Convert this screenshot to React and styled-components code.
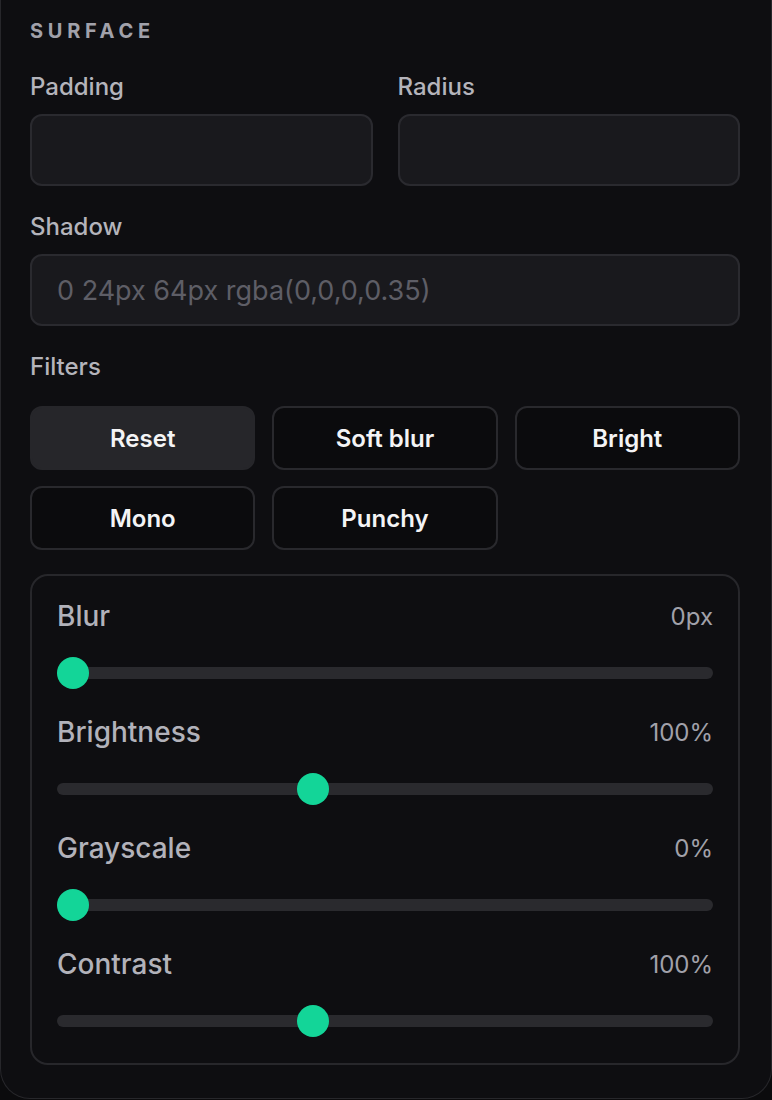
import React from "react";
import styled, { createGlobalStyle } from "styled-components";

const Global = createGlobalStyle`
  html, body { margin: 0; padding: 0; background: #0b0b0d; }
  body { font-family: Inter, "Noto Sans", sans-serif; -webkit-font-smoothing: antialiased; }
  * { box-sizing: border-box; }
`;

const Panel = styled.div`
  width: 772px;
  background: #0e0e11;
  border: 1px solid #27272b;
  border-top: none;
  border-radius: 0 0 30px 30px;
  padding: 19px 31px 33px 29px;
  display: flex;
  flex-direction: column;
`;

const SectionTitle = styled.div`
  font-size: 20px;
  line-height: 24px;
  font-weight: 700;
  letter-spacing: 4.7px;
  color: #a1a1aa;
  text-transform: uppercase;
  margin-bottom: 30px;
`;

const Grid2 = styled.div`
  display: grid;
  grid-template-columns: 1fr 1fr;
  column-gap: 25px;
`;

const Field = styled.div`
  display: flex;
  flex-direction: column;
  gap: 13px;
  margin-bottom: ${(p) => p.$mb ?? 27}px;
`;

const Label = styled.div`
  font-size: 24px;
  line-height: 28px;
  font-weight: 500;
  color: #b4b4bb;
`;

const Input = styled.input`
  height: 72px;
  width: 100%;
  background: #19191d;
  border: 2px solid #2a2a2f;
  border-radius: 12px;
  padding: 0 25px;
  font-family: Inter, sans-serif;
  font-size: 27px;
  color: #e4e4e7;
  outline: none;
  &::placeholder { color: #5e5e66; }
`;

const FilterGrid = styled.div`
  display: grid;
  grid-template-columns: repeat(3, 1fr);
  gap: 16px 17px;
  margin-top: 25px;
  margin-bottom: 24px;
`;

const FilterButton = styled.button`
  height: 64px;
  border-radius: 12px;
  border: 2px solid ${(p) => (p.$active ? "#26262a" : "#29292d")};
  background: ${(p) => (p.$active ? "#26262a" : "#0b0b0d")};
  color: #f4f4f5;
  font-family: Inter, sans-serif;
  font-size: 24px;
  font-weight: 560;
  cursor: pointer;
`;

const SliderBox = styled.div`
  border: 2px solid #27272b;
  border-radius: 18px;
  padding: 23px 25px 26px;
  display: flex;
  flex-direction: column;
  gap: 26px;
`;

const SliderRow = styled.div`
  display: flex;
  flex-direction: column;
  gap: 24px;
`;

const SliderHead = styled.div`
  display: flex;
  justify-content: space-between;
  align-items: center;
  height: 34px;
`;

const SliderName = styled.div`
  font-size: 28px;
  font-weight: 500;
  color: #b2b2ba;
`;

const SliderValue = styled.div`
  font-size: 24px;
  font-weight: 400;
  color: #a1a1aa;
`;

const TrackArea = styled.div`
  position: relative;
  height: 32px;
  display: flex;
  align-items: center;
`;

const Track = styled.div`
  width: 100%;
  height: 12px;
  border-radius: 6px;
  background: #2a2a2e;
`;

const Thumb = styled.div`
  position: absolute;
  top: 0;
  width: 32px;
  height: 32px;
  border-radius: 50%;
  background: #13d598;
`;

const sliders = [
  { name: "Blur", value: "0px", pct: 0 },
  { name: "Brightness", value: "100%", pct: 100 / 260 },
  { name: "Grayscale", value: "0%", pct: 0 },
  { name: "Contrast", value: "100%", pct: 100 / 260 },
];

const filters = ["Reset", "Soft blur", "Bright", "Mono", "Punchy"];

export default function App() {
  return (
    <>
      <Global />
      <Panel>
        <SectionTitle>Surface</SectionTitle>
        <Grid2>
          <Field>
            <Label>Padding</Label>
            <Input />
          </Field>
          <Field>
            <Label>Radius</Label>
            <Input />
          </Field>
        </Grid2>
        <Field>
          <Label>Shadow</Label>
          <Input placeholder="0 24px 64px rgba(0,0,0,0.35)" />
        </Field>
        <Label>Filters</Label>
        <FilterGrid>
          {filters.map((f, i) => (
            <FilterButton key={f} $active={i === 0}>{f}</FilterButton>
          ))}
        </FilterGrid>
        <SliderBox>
          {sliders.map((s) => (
            <SliderRow key={s.name}>
              <SliderHead>
                <SliderName>{s.name}</SliderName>
                <SliderValue>{s.value}</SliderValue>
              </SliderHead>
              <TrackArea>
                <Track />
                <Thumb style={{ left: `calc((100% - 32px) * ${s.pct})` }} />
              </TrackArea>
            </SliderRow>
          ))}
        </SliderBox>
      </Panel>
    </>
  );
}
